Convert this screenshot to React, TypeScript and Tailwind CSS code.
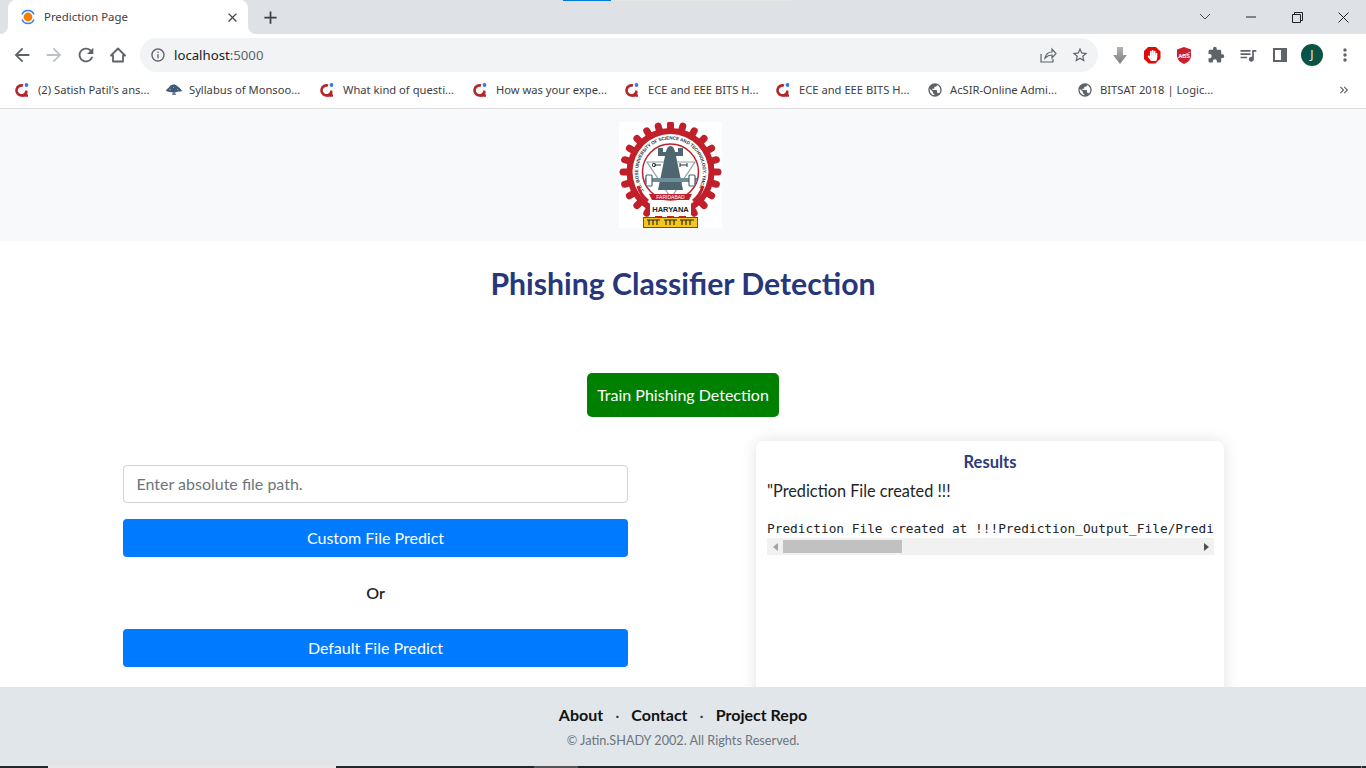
import React from "react";
import { MdArrowBack, MdArrowForward, MdRefresh, MdInfoOutline, MdStarBorder, MdExtension, MdMoreVert, MdPublic, MdClose, MdAdd, MdOutlineQueueMusic, MdKeyboardDoubleArrowRight } from "react-icons/md";
import { FaHandPaper } from "react-icons/fa";

const ui = { fontFamily: '"Noto Sans", "Open Sans", sans-serif' };
const lato = { fontFamily: 'Lato, "Liberation Sans", sans-serif' };

function QIcon() {
  return (
    <svg width="16" height="16" viewBox="0 0 16 16" className="shrink-0">
      <path d="M8 3.600A5 5 0 1 0 11.400 9.500" fill="none" stroke="#b5262b" strokeWidth="2.600" />
      <path d="M7 13.600h6M11.200 8.500v5" stroke="#b5262b" strokeWidth="2.200" />
      <circle cx="11.500" cy="3" r="1.900" fill="#3b78f0" />
    </svg>
  );
}

function TreeIcon() {
  return (
    <svg width="16" height="14" viewBox="0 0 16 14" className="shrink-0">
      <path d="M0 8c1-3 3-3 4-5 2-2 6-2 7 0 2 1 4 3 5 5-2 1-4 0-5 1-3 1-8 0-11-1z" fill="#3f5a78" />
      <path d="M3 6l2 1M7 4l1 1M11 6l1 1" stroke="#a9b8c6" strokeWidth="0.800" />
      <path d="M7 9h2l1 3H6z" fill="#6b7f93" />
    </svg>
  );
}

function Bookmark({ icon, text, w }: { icon: React.ReactNode; text: string; w: string }) {
  return (
    <div className={`flex items-center shrink-0 gap-[7px] ${w}`}>
      {icon}
      <span className="text-[11.2px] text-[#3c4043] whitespace-nowrap">{text}</span>
    </div>
  );
}

function Logo() {
  const teeth = Array.from({ length: 24 });
  return (
    <svg width="103" height="106" viewBox="0 0 103 106" className="bg-white block">
      <defs>
        <path id="arcTop" d="M24.900 68.600A32.500 32.500 0 1 1 78.100 68.600" />
      </defs>
      {teeth.map((_, i) => (
        <rect key={i} x="48" y="-1" width="7" height="13" rx="3.500" fill="#c1202b" transform={`rotate(${(i * 360) / 24} 51.5 50)`} />
      ))}
      <circle cx="51.500" cy="50" r="44" fill="#c1202b" />
      <circle cx="51.500" cy="50" r="38" fill="#fff" />
      <text fontSize="4.600" fontWeight="700" fill="#26303a" fontFamily="Liberation Sans, sans-serif">
        <textPath href="#arcTop" textLength="138" lengthAdjust="spacing">J.C. BOSE UNIVERSITY OF SCIENCE AND TECHNOLOGY, YMCA</textPath>
      </text>
      <circle cx="51.500" cy="50" r="28" fill="#fff" stroke="#c1202b" strokeWidth="1.500" />
      <path d="M28 40h48L52 76z" fill="none" stroke="#8fa0ad" strokeWidth="1.200" />
      <path d="M39 26h5v4h15v-4h5v8H39z" fill="#4d666f" />
      <path d="M51.500 24c-3 0-4.500 4-5.500 10l-7 34h25l-7-34c-1-6-2.500-10-5.500-10z" fill="#4d666f" />
      <rect x="26" y="56" width="52" height="4" fill="#6f8d99" />
      <rect x="27" y="53" width="6" height="11" rx="1" fill="#fff" stroke="#4d666f" strokeWidth="1.200" />
      <rect x="70" y="53" width="6" height="11" rx="1" fill="#fff" stroke="#4d666f" strokeWidth="1.200" />
      <path d="M35 43h7M61 43h7M61 41v4M68 41v4" stroke="#333" strokeWidth="1" />
      <circle cx="35" cy="43" r="1.700" fill="none" stroke="#333" />
      <path d="M30 72h43l-3 6H33z" fill="#c1202b" />
      <path d="M19 64c2 7 6 12 10 15M84 64c-2 7-6 12-10 15" fill="none" stroke="#c1202b" strokeWidth="3" />
      <rect x="31" y="82" width="41" height="12" fill="#fff" />
      <text x="51.500" y="77" textAnchor="middle" fontSize="5" fill="#fff" fontFamily="Liberation Sans, sans-serif">FARIDABAD</text>
      <text x="51.500" y="90" textAnchor="middle" fontSize="7.500" fontWeight="700" fill="#222" fontFamily="Liberation Sans, sans-serif">HARYANA</text>
      <rect x="24.500" y="95.500" width="54" height="10" fill="#f5c518" stroke="#a8322a" />
      <path d="M28 98h13M45 98h13M61 98h14" stroke="#222" strokeWidth="1" />
      <path d="M30 98v5M34 98v5M38 98v5M47 98v5M51 98v5M55 98v5M63 98v5M67 98v5M71 98v5" stroke="#222" strokeWidth="1.100" />
    </svg>
  );
}

export default function App() {
  return (
    <div className="h-screen w-full flex flex-col overflow-hidden bg-white" style={lato}>
      {/* tab strip */}
      <div className="h-[34px] bg-[#dee1e6] relative flex shrink-0" style={ui}>
        <div className="absolute top-0 left-[563px] w-[48px] h-px bg-[#0078d7]" />
        <div className="absolute top-0 left-[611px] w-[182px] h-px bg-[#e6e6e6]" />
        <svg width="8" height="8" viewBox="0 0 8 8" className="absolute left-0 bottom-0"><path d="M0 8A8 8 0 0 0 8 0V8z" fill="#fff" /></svg>
        <svg width="8" height="8" viewBox="0 0 8 8" className="absolute left-[248px] bottom-0"><path d="M8 8A8 8 0 0 1 0 0V8z" fill="#fff" /></svg>
        <div className="ml-2 w-[240px] h-[34px] bg-white rounded-t-lg flex items-center pl-[12px] pr-[8px]">
          <svg width="16" height="16" viewBox="0 0 16 16" className="shrink-0">
            <circle cx="8" cy="8" r="4.400" fill="#f57c00" />
            <path d="M2 5.500A6.500 6.500 0 0 1 14 5.500M2 10.500A6.500 6.500 0 0 0 14 10.500" fill="none" stroke="#2f7ff0" strokeWidth="1.500" />
          </svg>
          <span className="ml-2 text-[11.4px] text-[#3c4043] flex-1 whitespace-nowrap">Prediction Page</span>
          <MdClose size={15} color="#45484c" />
        </div>
        <div className="ml-[12px] h-[34px] flex items-center">
          <MdAdd size={21} color="#3c4043" />
        </div>
        <div className="flex-1" />
        <div className="w-[46px] flex items-center justify-center">
          <svg width="12" height="8" viewBox="0 0 12 8"><path d="M1 1l5 5 5-5" fill="none" stroke="#45484c" strokeWidth="1" /></svg>
        </div>
        <div className="w-[46px] flex items-center justify-center">
          <svg width="10" height="10" viewBox="0 0 10 10"><path d="M0 5h10" stroke="#222" strokeWidth="1" /></svg>
        </div>
        <div className="w-[46px] flex items-center justify-center">
          <svg width="11" height="11" viewBox="0 0 11 11"><path d="M.5 2.500h8v8h-8zM2.500 2.500v-2h8v8h-2" fill="none" stroke="#222" strokeWidth="1" /></svg>
        </div>
        <div className="w-[46px] flex items-center justify-center">
          <svg width="11" height="11" viewBox="0 0 11 11"><path d="M.5.500l10 10M10.500.500l-10 10" stroke="#222" strokeWidth="1" /></svg>
        </div>
      </div>

      {/* toolbar */}
      <div className="h-[38px] shrink-0 bg-white flex items-end" style={ui}>
        <div className="w-[140px] shrink-0 h-[38px] flex items-center pl-[6px] pt-[4px]">
          <div className="w-[32px] flex justify-center"><MdArrowBack size={22} color="#5f6368" /></div>
          <div className="w-[32px] flex justify-center"><MdArrowForward size={22} color="#bdc0c4" /></div>
          <div className="w-[32px] flex justify-center"><MdRefresh size={22} color="#5f6368" /></div>
          <div className="w-[32px] flex justify-center">
            <svg width="18" height="18" viewBox="0 0 18 18"><path d="M2 9.500L9 2.500l7 7h-2v6H4v-6z" fill="none" stroke="#5f6368" strokeWidth="1.800" strokeLinejoin="round" /></svg>
          </div>
        </div>
        <div className="w-[958px] shrink-0 h-[34px] bg-[#f1f3f4] rounded-full flex items-center pl-[10px] pr-[9px]">
          <MdInfoOutline size={16} color="#5f6368" />
          <span className="ml-[8px] pt-[2px] text-[13.200px] text-[#202124] whitespace-nowrap">localhost<span className="text-[#5f6368]">:5000</span></span>
          <div className="flex-1" />
          <svg width="18" height="18" viewBox="0 0 18 18" className="mr-[14px]"><path d="M2 8v8h12v-3M6 12c1-4 4-6 7-6V3l4 4.500-4 4.500V9c-3 0-5 1-7 3z" fill="none" stroke="#5f6368" strokeWidth="1.200" /></svg>
          <MdStarBorder size={18} color="#5f6368" />
        </div>
        <div className="flex-1 h-[38px] flex items-center pt-[4px] pl-[6px]">
          <div className="w-[32px] flex justify-center">
            <svg width="14" height="17" viewBox="0 0 14 17">
              <defs>
                <linearGradient id="dl" x1="0" y1="0" x2="0" y2="1"><stop offset="0" stopColor="#b5b5b5" /><stop offset="1" stopColor="#7d7d7d" /></linearGradient>
              </defs>
              <path d="M4 0h6v8h4l-7 9-7-9h4z" fill="url(#dl)" />
            </svg>
          </div>
          <div className="w-[32px] flex justify-center">
            <div className="w-[17px] h-[17px] bg-[#e00b0b] [clip-path:polygon(30%_0,70%_0,100%_30%,100%_70%,70%_100%,30%_100%,0_70%,0_30%)] flex items-center justify-center"><FaHandPaper size={11} color="#fff" /></div>
          </div>
          <div className="w-[32px] flex justify-center">
            <svg width="16" height="17" viewBox="0 0 16 17">
              <path d="M8 0l7 2.500v6c0 4-3 7-7 8.500-4-1.500-7-4.500-7-8.500v-6z" fill="#c8202c" />
              <text x="8" y="10.500" textAnchor="middle" fontSize="5.500" fontWeight="700" fill="#fff" fontFamily="Liberation Sans, sans-serif">ABS</text>
              <path d="M1.500 11L14.500 5" stroke="#fff" strokeWidth="0.600" />
            </svg>
          </div>
          <div className="w-[32px] flex justify-center"><MdExtension size={18} color="#5f6368" /></div>
          <div className="w-[32px] flex justify-center"><MdOutlineQueueMusic size={20} color="#5f6368" /></div>
          <div className="w-[32px] flex justify-center">
            <svg width="14" height="14" viewBox="0 0 14 14"><path d="M1 1h12v12H1z" fill="none" stroke="#5f6368" strokeWidth="2" /><path d="M8 1h5v12H8z" fill="#5f6368" /></svg>
          </div>
          <div className="w-[32px] flex justify-center">
            <div className="w-[22px] h-[22px] rounded-full bg-[#0b5345] text-[#e6efec] text-[12px] flex items-center justify-center">J</div>
          </div>
          <div className="w-[33px] flex justify-center"><MdMoreVert size={20} color="#5f6368" /></div>
        </div>
      </div>

      {/* bookmarks */}
      <div className="h-[37px] shrink-0 bg-white border-b border-[#dadce0] flex items-center pl-[15px]" style={ui}>
        <Bookmark w="w-[151px]" icon={<QIcon />} text="(2) Satish Patil's ans..." />
        <Bookmark w="w-[154px]" icon={<TreeIcon />} text="Syllabus of Monsoo..." />
        <Bookmark w="w-[153px]" icon={<QIcon />} text="What kind of questi..." />
        <Bookmark w="w-[152px]" icon={<QIcon />} text="How was your expe..." />
        <Bookmark w="w-[151px]" icon={<QIcon />} text="ECE and EEE BITS H..." />
        <Bookmark w="w-[151px]" icon={<QIcon />} text="ECE and EEE BITS H..." />
        <Bookmark w="w-[150px]" icon={<MdPublic size={16} color="#5f6368" className="shrink-0" />} text="AcSIR-Online Admi..." />
        <Bookmark w="w-[260px]" icon={<MdPublic size={16} color="#5f6368" className="shrink-0" />} text="BITSAT 2018 | Logic..." />
        <MdKeyboardDoubleArrowRight size={14} color="#5f6368" />
      </div>

      {/* logo band */}
      <div className="h-[132px] shrink-0 bg-[#f8f9fa] flex justify-center pt-[13px] pr-[25px]">
        <Logo />
      </div>

      {/* main */}
      <div className="flex-1 min-h-0 overflow-hidden flex flex-col items-center">
        <h1 className="shrink-0 mt-[23px] text-[30.200px] leading-[38px] font-bold text-[#28367a] whitespace-nowrap">Phishing Classifier Detection</h1>
        <button className="shrink-0 mt-[71px] w-[192px] h-[44px] bg-[#008000] rounded-[5px] text-white text-[16px]">Train Phishing Detection</button>
        <div className="shrink-0 mt-[24px] w-full flex">
          <div className="ml-[123px] w-[505px] pt-[24px] flex flex-col">
            <input
              placeholder="Enter absolute file path."
              className="h-[38px] w-full border border-[#ced4da] rounded-[4px] pl-[12.500px] pr-[13px] pb-[2px] text-[16px] placeholder:text-[#6c757d] bg-white"
            />
            <button className="mt-[16px] h-[38px] w-full bg-[#007bff] rounded-[4px] text-white text-[16px]">Custom File Predict</button>
            <div className="h-[72px] flex items-center justify-center text-[16px] font-semibold text-[#212529]">Or</div>
            <button className="h-[38px] w-full bg-[#007bff] rounded-[4px] text-white text-[16px]">Default File Predict</button>
          </div>
          <div className="ml-[128px] w-[468px] h-[300px] bg-white rounded-[8px] shadow-[0_0_16px_rgba(0,0,0,0.12)] px-[11px] pt-[11px]">
            <div className="text-center text-[16.500px] font-bold text-[#2f3a7a] leading-[20px]">Results</div>
            <div className="mt-[9px] text-[16.300px] text-[#212529] leading-[20px]">"Prediction File created !!!</div>
            <pre className="mt-[19px] text-[12.800px] leading-[18px] text-[#212529] whitespace-pre" style={{ fontFamily: '"DejaVu Sans Mono", "Liberation Mono", monospace' }}>Prediction File created at !!!Prediction_Output_File/Predi</pre>
            <div className="w-[447px] h-[17px] bg-[#f1f1f1] flex items-center">
              <div className="w-[16px] flex justify-center">
                <svg width="5" height="8" viewBox="0 0 5 8"><path d="M5 0v8L0 4z" fill="#a3a3a3" /></svg>
              </div>
              <div className="w-[119px] h-[13px] bg-[#c1c1c1]" />
              <div className="flex-1" />
              <div className="w-[16px] flex justify-center">
                <svg width="5" height="8" viewBox="0 0 5 8"><path d="M0 0v8l5-4z" fill="#505050" /></svg>
              </div>
            </div>
          </div>
        </div>
      </div>

      {/* footer */}
      <div className="h-[79px] shrink-0 bg-[#e1e6ea] flex flex-col items-center pt-[18px]">
        <div className="flex items-center text-[16px] font-bold text-[#111] leading-[20px]">
          <span>About</span>
          <span className="mx-[12px] font-normal text-[#333]">·</span>
          <span>Contact</span>
          <span className="mx-[12px] font-normal text-[#333]">·</span>
          <span>Project Repo</span>
        </div>
        <div className="mt-[6px] text-[12.700px] text-[#6c757d] leading-[18px]">© Jatin.SHADY 2002. All Rights Reserved.</div>
      </div>

      {/* taskbar sliver */}
      <div className="h-[2px] shrink-0 bg-[#25272a] flex">
        <div className="ml-[48px] w-[288px] bg-[#e8e8e8]" />
        <div className="ml-[198px] w-[44px] bg-[#555]" />
        <div className="ml-[783px] w-px bg-[#888]" />
      </div>
    </div>
  );
}
